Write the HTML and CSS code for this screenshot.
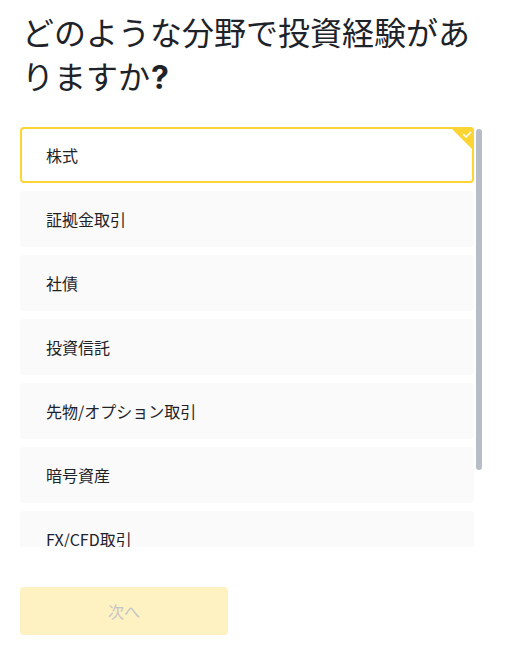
FILE: index.html
```html
<!DOCTYPE html>
<html lang="ja">
<head>
<meta charset="utf-8">
<link rel="stylesheet" href="styles.css">
</head>
<body>
<main class="page">
  <h1 class="title">どのような分野で投資経験がありますか<span class="q">?</span></h1>
  <div class="list-wrap">
    <div class="list">
      <div class="option selected">株式
        <span class="corner">
          <svg viewBox="0 0 24 24" width="24" height="24"><path d="M0 0H20A4 4 0 0 1 24 4V24Z" fill="#fcd535"/><path d="M13.5 7.5l2.5 2.5 4.5-4.5" fill="none" stroke="#fff" stroke-width="1.6" stroke-linecap="round" stroke-linejoin="round"/></svg>
        </span>
      </div>
      <div class="option">証拠金取引</div>
      <div class="option">社債</div>
      <div class="option">投資信託</div>
      <div class="option">先物/オプション取引</div>
      <div class="option">暗号資産</div>
      <div class="option">FX/CFD取引</div>
      <div class="option">その他</div>
    </div>
    <div class="scrollbar"><div class="thumb"></div></div>
  </div>
  <button class="next" disabled>次へ</button>
</main>
</body>
</html>
```

FILE: styles.css
```css
html, body {
  margin: 0;
  padding: 0;
  background: #ffffff;
}
body {
  font-family: "Noto Sans CJK JP", "Noto Sans", sans-serif;
  color: #1e2329;
}
.page {
  display: flex;
  flex-direction: column;
  align-items: flex-start;
  padding: 9px 0 0 20px;
}
.title {
  margin: 0 0 0 2px;
  width: 456px;
  font-size: 32px;
  line-height: 44px;
  font-weight: 400;
  color: #1e2329;
}
.title .q {
  font-family: "Inter", sans-serif;
  font-weight: 700;
  margin-left: 1px;
}
.list-wrap {
  margin-top: 27px;
  display: flex;
  gap: 2px;
  height: 420px;
}
.list {
  width: 454px;
  height: 420px;
  overflow: hidden;
  display: flex;
  flex-direction: column;
  gap: 8px;
}
.scrollbar {
  width: 6px;
  height: 420px;
  padding-top: 2px;
  box-sizing: border-box;
}
.thumb {
  width: 6px;
  height: 341px;
  background: #b7bdc6;
  border-radius: 3px;
}
.option {
  position: relative;
  flex: 0 0 56px;
  width: 454px;
  box-sizing: border-box;
  display: flex;
  align-items: center;
  padding-left: 24px;
  background: #fafafa;
  border: 2px solid transparent;
  border-radius: 4px;
  font-size: 16px;
  line-height: 24px;
  color: #1e2329;
}
.option.selected {
  background: #ffffff;
  border-color: #fcd535;
}
.corner {
  position: absolute;
  top: -2px;
  right: -2px;
  width: 24px;
  height: 24px;
  display: block;
}
.corner svg {
  display: block;
}
.next {
  margin-top: 40px;
  width: 208px;
  height: 48px;
  border: none;
  border-radius: 4px;
  background: #fef1c2;
  color: #c5c5c5;
  font-family: "Noto Sans CJK JP", sans-serif;
  font-size: 16px;
  padding: 0;
}
```
